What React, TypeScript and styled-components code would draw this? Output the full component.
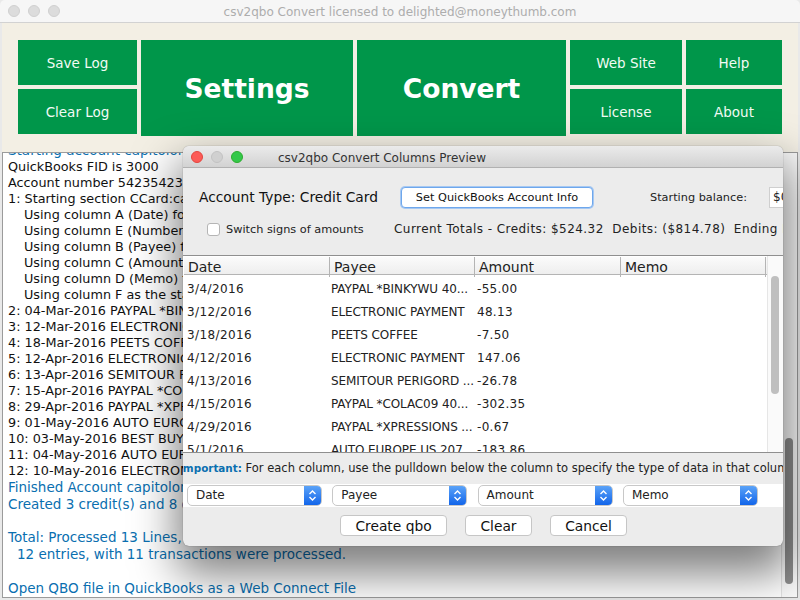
import React from 'react';
import styled, { createGlobalStyle } from 'styled-components';

const font = `'DejaVu Sans', 'Noto Sans', sans-serif`;

const Global = createGlobalStyle`
  html, body { margin: 0; padding: 0; background: #fff; }
  * { box-sizing: border-box; }
`;

const Screen = styled.div`
  position: relative;
  width: 800px;
  height: 600px;
  overflow: hidden;
  display: flex;
  flex-direction: column;
  background: #e9e9e9;
  font-family: ${font};
`;

const TitleBar = styled.div`
  flex: none;
  height: 23px;
  background: #f6f6f6;
  border-bottom: 1px solid #d2d2d2;
  border-radius: 5px 5px 0 0;
  display: flex;
  align-items: center;
  position: relative;
  padding-left: 8px;
  gap: 8px;
`;

const Light = styled.span<{ $c: string; $b: string }>`
  width: 12px;
  height: 12px;
  border-radius: 50%;
  background: ${p => p.$c};
  border: 1px solid ${p => p.$b};
  flex: none;
`;

const TitleText = styled.div`
  position: absolute;
  left: 0;
  right: 0;
  top: 4px;
  text-align: center;
  font-size: 12px;
  line-height: 16px;
  color: #adadad;
`;

const Toolbar = styled.div`
  flex: none;
  height: 129px;
  margin: 0 2px;
  background: #f3efe4;
  padding: 17px 16px 0;
  display: flex;
  gap: 4px;
  align-items: flex-start;
`;

const Stack = styled.div<{ $w: number }>`
  width: ${p => p.$w}px;
  display: flex;
  flex-direction: column;
  gap: 4px;
  flex: none;
`;

const SmallBtn = styled.div`
  height: 45px;
  background: #00964a;
  color: #f2fbf5;
  font-size: 13.5px;
  display: flex;
  align-items: center;
  justify-content: center;
`;

const BigBtn = styled.div<{ $w: number }>`
  width: ${p => p.$w}px;
  height: 96px;
  flex: none;
  background: #00964a;
  color: #fff;
  font-size: 26.5px;
  font-weight: 700;
  display: flex;
  align-items: center;
  justify-content: center;
  padding-top: 1px;
`;

const LogPanel = styled.div`
  flex: none;
  height: 446px;
  margin: 0 2px;
  background: #fff;
  border: 1px solid #9b9b9b;
  position: relative;
  overflow: hidden;
  display: flex;
`;

const LogText = styled.div`
  flex: 1;
  margin-top: -11px;
  padding-left: 5px;
  overflow: hidden;
`;

const LogLine = styled.div<{ $blue?: boolean; $indent?: number }>`
  height: ${p => (p.$blue ? 16.8 : 16)}px;
  line-height: ${p => (p.$blue ? 16.8 : 16)}px;
  font-size: ${p => (p.$blue ? 13.5 : 12.8)}px;
  color: ${p => (p.$blue ? '#0a6fb0' : '#111')};
  padding-left: ${p => p.$indent ?? 0}px;
  white-space: pre;
`;

const OuterTrack = styled.div`
  flex: none;
  width: 16px;
  background: #fafafa;
  border-left: 1px solid #e4e4e4;
  position: relative;
  padding: 285px 3px 0 3px;
`;

const OuterThumb = styled.div`
  width: 8px;
  height: 146px;
  border-radius: 4px;
  background: #8e8e8e;
`;

const Dialog = styled.div`
  position: absolute;
  left: 183px;
  top: 146px;
  width: 600px;
  height: 400px;
  background: #ececec;
  border-radius: 6px;
  box-shadow: 0 0 1px rgba(0,0,0,.55), 0 22px 44px 6px rgba(0,0,0,.5);
  overflow: hidden;
  display: flex;
  flex-direction: column;
`;

const DialogBar = styled.div`
  flex: none;
  height: 22px;
  background: linear-gradient(#ebebeb, #d2d2d2);
  border-bottom: 1px solid #b1b1b1;
  display: flex;
  align-items: center;
  gap: 8px;
  padding-left: 8px;
  position: relative;
`;

const DialogTitle = styled.div`
  position: absolute;
  left: 95px;
  top: 4px;
  font-size: 12px;
  line-height: 16px;
  color: #333;
`;

const TopRow = styled.div`
  flex: none;
  height: 21px;
  margin-top: 19px;
  padding-left: 16px;
  display: flex;
  align-items: center;
  white-space: nowrap;
`;

const AccountType = styled.div`
  width: 202px;
  flex: none;
  font-size: 13.8px;
  color: #111;
  padding-bottom: 1px;
`;

const FocusBtn = styled.div`
  width: 192px;
  height: 21px;
  flex: none;
  background: #fff;
  border-radius: 4px;
  border: 1px solid #6ea7ec;
  box-shadow: 0 0 0 1px #a6c8f2;
  font-size: 11.3px;
  color: #111;
  display: flex;
  align-items: center;
  justify-content: center;
`;

const BalanceLabel = styled.div`
  width: 119px;
  margin-left: 57px;
  flex: none;
  font-size: 11.3px;
  color: #222;
`;

const BalanceInput = styled.div`
  width: 40px;
  height: 21px;
  flex: none;
  background: #fff;
  border: 1px solid #cfcfcf;
  font-size: 12px;
  color: #222;
  padding-left: 3px;
  line-height: 19px;
`;

const SecondRow = styled.div`
  flex: none;
  height: 18px;
  margin-top: 12px;
  padding-left: 24px;
  display: flex;
  align-items: center;
  white-space: pre;
  font-size: 12px;
  color: #222;
`;

const Check = styled.span`
  width: 13px;
  height: 13px;
  flex: none;
  background: #fff;
  border: 1px solid #b5b5b5;
  border-radius: 3px;
  margin-right: 6px;
`;

const SwitchLabel = styled.span`
  width: 168px;
  flex: none;
  font-size: 11.3px;
`;

const Totals = styled.span`
  letter-spacing: 0.45px;
`;

const TableFrame = styled.div`
  flex: none;
  height: 198px;
  margin-top: 17px;
  border-top: 1px solid #8f8f8f;
  border-bottom: 1px solid #8f8f8f;
  background: #fff;
  display: flex;
  overflow: hidden;
`;

const TableBody = styled.div`
  width: 584px;
  flex: none;
  padding-left: 1px;
  display: flex;
  flex-direction: column;
`;

const HeadRow = styled.div`
  display: grid;
  grid-template-columns: 146px 145px 146px 145px;
  height: 18px;
  margin-top: 1px;
  margin-bottom: 3px;
  background: linear-gradient(#fbfbfb, #eeeeee);
  border-bottom: 1px solid #b4b4b4;
  flex: none;
`;

const HeadCell = styled.div`
  font-size: 14px;
  line-height: 20px;
  padding-left: 4px;
  color: #222;
  border-right: 1px solid #b4b4b4;
`;

const DataRow = styled.div`
  display: grid;
  grid-template-columns: 146px 145px 146px 145px;
  height: 23px;
  flex: none;
`;

const DataCell = styled.div<{ $pad: number; $track: number }>`
  font-size: 12px;
  line-height: 23px;
  padding-left: ${p => p.$pad}px;
  letter-spacing: ${p => p.$track}px;
  color: #222;
  white-space: pre;
  overflow: hidden;
`;

const TableTrack = styled.div`
  flex: 1;
  border-left: 1px solid #e6e6e6;
  background: #fafafa;
  padding: 20px 0 0 3px;
`;

const TableThumb = styled.div`
  width: 8px;
  height: 118px;
  background: #bfbfbf;
  border-radius: 4px;
`;

const Notice = styled.div`
  flex: none;
  height: 31px;
  line-height: 31px;
  font-size: 11.5px;
  color: #222;
  white-space: pre;
  overflow: hidden;
  text-indent: -4px;
`;

const NoticeStrong = styled.b`
  color: #0a6fb0;
  font-size: 10.4px;
`;

const SelectBand = styled.div`
  flex: none;
  height: 23px;
  background: #fff;
  padding-left: 4px;
  display: flex;
  gap: 10.3px;
  align-items: center;
`;

const Select = styled.div`
  width: 135px;
  height: 21px;
  flex: none;
  background: #fff;
  border: 1px solid #c8c8c8;
  border-radius: 5px;
  overflow: hidden;
  display: flex;
  align-items: stretch;
  font-size: 12px;
  color: #222;
`;

const SelectLabel = styled.span`
  flex: 1;
  padding-left: 8px;
  line-height: 18px;
`;

const SelectArrow = styled.span`
  width: 17px;
  flex: none;
  background: linear-gradient(#5ba3f8, #1265ea);
  display: flex;
  align-items: center;
  justify-content: center;
`;

const ActionRow = styled.div`
  flex: none;
  margin-top: 8px;
  padding-left: 157px;
  display: flex;
  gap: 18px;
`;

const ActionBtn = styled.div<{ $w: number }>`
  width: ${p => p.$w}px;
  height: 21px;
  background: #fff;
  border: 1px solid #c6c6c6;
  border-radius: 4px;
  font-size: 13.8px;
  color: #111;
  display: flex;
  align-items: center;
  justify-content: center;
  padding-top: 1px;
`;

const log: { t: string; blue?: boolean; indent?: number }[] = [
  { t: 'Starting account capitolone', blue: true },
  { t: 'QuickBooks FID is 3000' },
  { t: 'Account number 542354235' },
  { t: '1: Starting section CCard:capitolone' },
  { t: 'Using column A (Date) for the date', indent: 16 },
  { t: 'Using column E (Number) for the number', indent: 16 },
  { t: 'Using column B (Payee) for the payee', indent: 16 },
  { t: 'Using column C (Amount) for the amount', indent: 16 },
  { t: 'Using column D (Memo) for the memo', indent: 16 },
  { t: 'Using column F as the start', indent: 16 },
  { t: '2: 04-Mar-2016 PAYPAL *BINKYWU' },
  { t: '3: 12-Mar-2016 ELECTRONIC PAYMENT' },
  { t: '4: 18-Mar-2016 PEETS COFFEE' },
  { t: '5: 12-Apr-2016 ELECTRONIC PAYMENT' },
  { t: '6: 13-Apr-2016 SEMITOUR PERIGORD' },
  { t: '7: 15-Apr-2016 PAYPAL *COLAC09' },
  { t: '8: 29-Apr-2016 PAYPAL *XPRESSIONS' },
  { t: '9: 01-May-2016 AUTO EUROPE US' },
  { t: '10: 03-May-2016 BEST BUY' },
  { t: '11: 04-May-2016 AUTO EUROPE US' },
  { t: '12: 10-May-2016 ELECTRONIC PAYMENT' },
  { t: 'Finished Account capitolone', blue: true },
  { t: 'Created 3 credit(s) and 8 debit(s)', blue: true },
  { t: ' ', blue: true },
  { t: 'Total: Processed 13 Lines,', blue: true },
  { t: '12 entries, with 11 transactions were processed.', blue: true, indent: 9 },
  { t: ' ', blue: true },
  { t: 'Open QBO file in QuickBooks as a Web Connect File', blue: true },
];

const rows = [
  ['3/4/2016', 'PAYPAL *BINKYWU 40...', '-55.00'],
  ['3/12/2016', 'ELECTRONIC PAYMENT', '48.13'],
  ['3/18/2016', 'PEETS COFFEE', '-7.50'],
  ['4/12/2016', 'ELECTRONIC PAYMENT', '147.06'],
  ['4/13/2016', 'SEMITOUR PERIGORD ...', '-26.78'],
  ['4/15/2016', 'PAYPAL *COLAC09 40...', '-302.35'],
  ['4/29/2016', 'PAYPAL *XPRESSIONS ...', '-0.67'],
  ['5/1/2016', 'AUTO EUROPE US 207...', '-183.86'],
];

const cellPad = [3, 1, 2];
const cellTrack = [0.4, -0.1, 0.3];

const Chevrons = () => (
  <svg width="9" height="13" viewBox="0 0 9 13" fill="none" stroke="#fff" strokeWidth="1.4">
    <path d="M1.5 5 L4.5 2 L7.5 5" />
    <path d="M1.5 8 L4.5 11 L7.5 8" />
  </svg>
);

export default function App() {
  return (
    <Screen>
      <Global />
      <TitleBar>
        <Light $c="#dcdcdc" $b="#d0d0d0" />
        <Light $c="#dcdcdc" $b="#d0d0d0" />
        <Light $c="#dcdcdc" $b="#d0d0d0" />
        <TitleText>csv2qbo Convert licensed to delighted@moneythumb.com</TitleText>
      </TitleBar>
      <Toolbar>
        <Stack $w={119}>
          <SmallBtn>Save Log</SmallBtn>
          <SmallBtn>Clear Log</SmallBtn>
        </Stack>
        <BigBtn $w={212}>Settings</BigBtn>
        <BigBtn $w={209}>Convert</BigBtn>
        <Stack $w={112}>
          <SmallBtn>Web Site</SmallBtn>
          <SmallBtn>License</SmallBtn>
        </Stack>
        <Stack $w={96}>
          <SmallBtn>Help</SmallBtn>
          <SmallBtn>About</SmallBtn>
        </Stack>
      </Toolbar>
      <LogPanel>
        <LogText>
          {log.map((l, i) => (
            <LogLine key={i} $blue={l.blue} $indent={l.indent}>{l.t}</LogLine>
          ))}
        </LogText>
        <OuterTrack>
          <OuterThumb />
        </OuterTrack>
      </LogPanel>
      <Dialog>
        <DialogBar>
          <Light $c="#fc5b57" $b="#e2463f" />
          <Light $c="#d0d0d0" $b="#c2c2c2" />
          <Light $c="#34c84a" $b="#2dac2f" />
          <DialogTitle>csv2qbo Convert Columns Preview</DialogTitle>
        </DialogBar>
        <TopRow>
          <AccountType>Account Type: Credit Card</AccountType>
          <FocusBtn>Set QuickBooks Account Info</FocusBtn>
          <BalanceLabel>Starting balance:</BalanceLabel>
          <BalanceInput>$0.00</BalanceInput>
        </TopRow>
        <SecondRow>
          <Check />
          <SwitchLabel>Switch signs of amounts</SwitchLabel>
          <Totals>Current Totals - Credits: $524.32  Debits: ($814.78)  Ending Balance</Totals>
        </SecondRow>
        <TableFrame>
          <TableBody>
            <HeadRow>
              <HeadCell>Date</HeadCell>
              <HeadCell>Payee</HeadCell>
              <HeadCell>Amount</HeadCell>
              <HeadCell>Memo</HeadCell>
            </HeadRow>
            {rows.map(r => (
              <DataRow key={r[0]}>
                {r.map((c, i) => <DataCell key={i} $pad={cellPad[i]} $track={cellTrack[i]}>{c}</DataCell>)}
              </DataRow>
            ))}
          </TableBody>
          <TableTrack>
            <TableThumb />
          </TableTrack>
        </TableFrame>
        <Notice>
          <NoticeStrong>Important:</NoticeStrong> For each column, use the pulldown below the column to specify the type of data in that column
        </Notice>
        <SelectBand>
          {['Date', 'Payee', 'Amount', 'Memo'].map(s => (
            <Select key={s}>
              <SelectLabel>{s}</SelectLabel>
              <SelectArrow><Chevrons /></SelectArrow>
            </Select>
          ))}
        </SelectBand>
        <ActionRow>
          <ActionBtn $w={107}>Create qbo</ActionBtn>
          <ActionBtn $w={67}>Clear</ActionBtn>
          <ActionBtn $w={77}>Cancel</ActionBtn>
        </ActionRow>
      </Dialog>
    </Screen>
  );
}
